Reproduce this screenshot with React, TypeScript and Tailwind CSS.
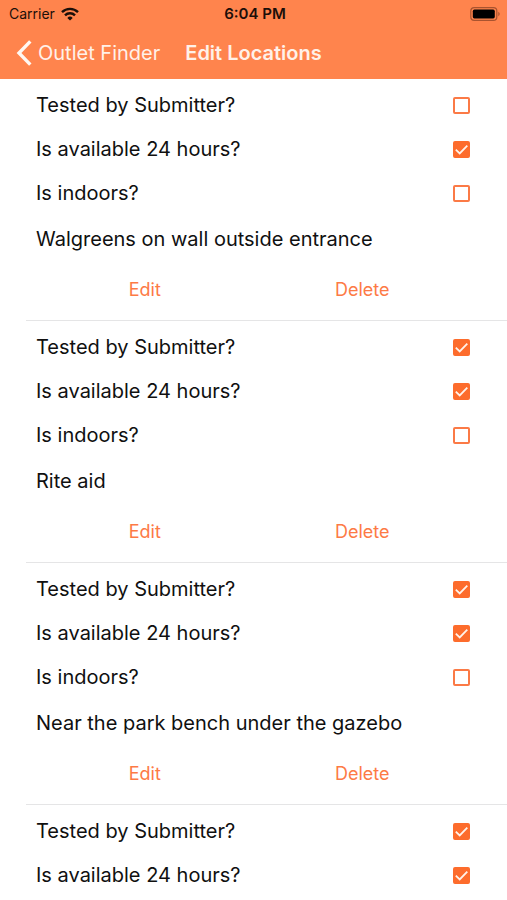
import { useState } from "react";

type Check = { label: string; checked: boolean };

type Location = {
  checks: Check[];
  description?: string;
};

const locations: Location[] = [
  {
    checks: [
      { label: "Tested by Submitter?", checked: false },
      { label: "Is available 24 hours?", checked: true },
      { label: "Is indoors?", checked: false },
    ],
    description: "Walgreens on wall outside entrance",
  },
  {
    checks: [
      { label: "Tested by Submitter?", checked: true },
      { label: "Is available 24 hours?", checked: true },
      { label: "Is indoors?", checked: false },
    ],
    description: "Rite aid",
  },
  {
    checks: [
      { label: "Tested by Submitter?", checked: true },
      { label: "Is available 24 hours?", checked: true },
      { label: "Is indoors?", checked: false },
    ],
    description: "Near the park bench under the gazebo",
  },
  {
    checks: [
      { label: "Tested by Submitter?", checked: true },
      { label: "Is available 24 hours?", checked: true },
    ],
  },
];

function WifiIcon() {
  return (
    <svg viewBox="0 0 18 14" className="h-[14px] w-[18px]" fill="none" stroke="#1c0f09" strokeWidth="2.4" aria-hidden="true">
      <path d="M1 5.2a11.4 11.4 0 0 1 16 0" />
      <path d="M4 8.3a7.1 7.1 0 0 1 10 0" />
      <path d="M9 13.6 6.3 10.9a3.8 3.8 0 0 1 5.4 0Z" fill="#1c0f09" stroke="none" />
    </svg>
  );
}

function BatteryIcon() {
  return (
    <svg viewBox="0 0 31 14" className="h-[14px] w-[31px]" aria-hidden="true">
      <rect x="0.8" y="0.7" width="26" height="12.6" rx="3.4" fill="none" stroke="#a9532f" strokeWidth="1.2" />
      <rect x="2.8" y="2.6" width="22" height="8.8" rx="1.6" fill="#000" />
      <path d="M28.3 4.7a2.6 2.6 0 0 1 0 4.6Z" fill="#a9532f" />
    </svg>
  );
}

function CheckRow({ label, initial }: { label: string; initial: boolean }) {
  const [checked, setChecked] = useState(initial);
  return (
    <label className="flex h-11 items-center justify-between pr-[37px] pl-9">
      <span>{label}</span>
      <span className="grid size-[17px] shrink-0">
        <input
          type="checkbox"
          checked={checked}
          onChange={() => setChecked(!checked)}
          className="col-start-1 row-start-1 size-[17px] appearance-none rounded-[2px] border-2 border-[#fb7a46] checked:border-[#fd6c2c] checked:bg-[#fd6c2c]"
        />
        {checked && (
          <svg viewBox="0 0 17 17" className="pointer-events-none col-start-1 row-start-1 size-[17px]" fill="none" stroke="#fff3ea" strokeWidth="1.8" aria-hidden="true">
            <path d="m2.8 8.6 3.9 3.8 7.6-7.8" />
          </svg>
        )}
      </span>
    </label>
  );
}

function LocationItem({ location }: { location: Location }) {
  return (
    <li className="pt-1">
      {location.checks.map((check) => (
        <CheckRow key={check.label} label={check.label} initial={check.checked} />
      ))}
      {location.description && (
        <>
          <p className="flex h-12 items-center px-9">{location.description}</p>
          <div className="grid h-[53px] grid-cols-2 px-9 text-[18px] text-[#fd7a45]">
            <button type="button">Edit</button>
            <button type="button">Delete</button>
          </div>
          <div className="mt-1 ml-[26px] h-px bg-[#e5e5e6]" />
        </>
      )}
    </li>
  );
}

export default function App() {
  return (
    <div className="flex h-dvh flex-col overflow-hidden bg-white font-['Inter','Liberation_Sans',sans-serif] text-[20px] leading-6 text-[#101010]">
      <header className="shrink-0 bg-[#ff844d]">
        <div className="grid h-[27px] grid-cols-[1fr_auto_1fr] items-center pr-[6px] pl-[9px] text-[14px] leading-5 text-[#1c0f09]">
          <div className="flex items-center gap-[6px]">
            <span>Carrier</span>
            <WifiIcon />
          </div>
          <span className="text-[15px] font-semibold">6:04 PM</span>
          <div className="flex justify-end">
            <BatteryIcon />
          </div>
        </div>
        <nav className="grid h-[52px] grid-cols-[1fr_auto_1fr] items-center px-4 text-[20px] text-[#fff1e9]">
          <a href="#outlet-finder" className="flex items-center gap-[6px] whitespace-nowrap">
            <svg viewBox="0 0 16 26" className="h-[26px] w-4 shrink-0" fill="none" stroke="#fff8f3" strokeWidth="3.4" aria-hidden="true">
              <path d="M14.3 1.4 3 13l11.3 11.6" />
            </svg>
            Outlet Finder
          </a>
          <h1 className="font-semibold">Edit Locations</h1>
        </nav>
      </header>
      <ul className="min-h-0 flex-1 overflow-y-auto [scrollbar-width:none]">
        {locations.map((location, index) => (
          <LocationItem key={index} location={location} />
        ))}
      </ul>
    </div>
  );
}
